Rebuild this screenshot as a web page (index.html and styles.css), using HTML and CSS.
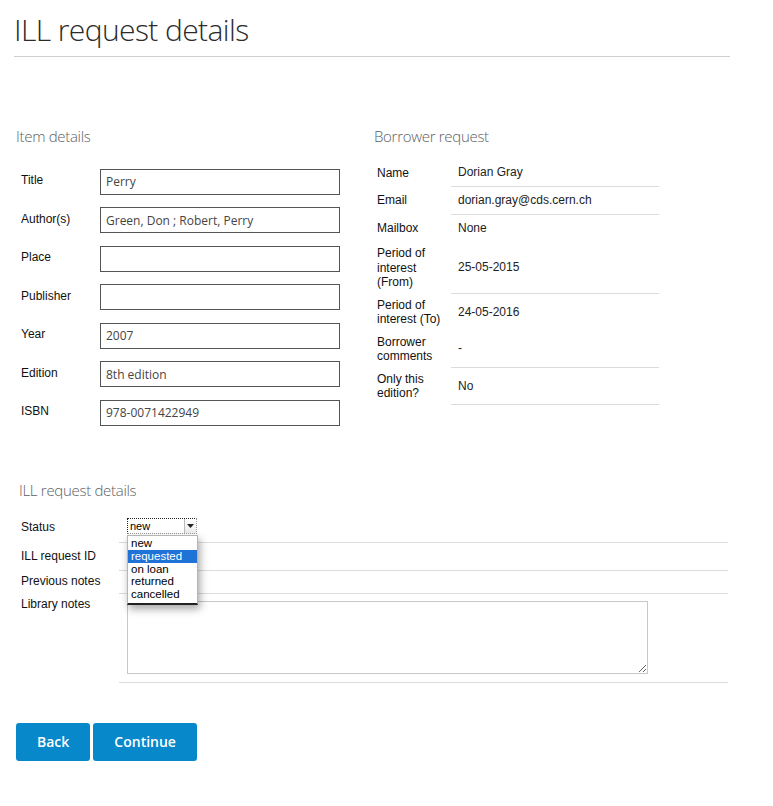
FILE: index.html
```html
<!DOCTYPE html>
<html>
<head>
<meta charset="utf-8">
<title>ILL request details</title>
<link rel="stylesheet" href="styles.css">
</head>
<body>
<div class="page">
  <h1 class="page-title">ILL request details</h1>
  <hr class="rule">

  <div class="columns">
    <section class="col">
      <h2 class="section-title">Item details</h2>
      <div class="item-form">
        <label class="item-label">Title</label><input class="item-input" type="text" value="Perry">
        <label class="item-label">Author(s)</label><input class="item-input" type="text" value="Green, Don ; Robert, Perry">
        <label class="item-label">Place</label><input class="item-input" type="text" value="">
        <label class="item-label">Publisher</label><input class="item-input" type="text" value="">
        <label class="item-label">Year</label><input class="item-input" type="text" value="2007">
        <label class="item-label">Edition</label><input class="item-input" type="text" value="8th edition">
        <label class="item-label">ISBN</label><input class="item-input" type="text" value="978-0071422949">
      </div>
    </section>

    <section class="col">
      <h2 class="section-title">Borrower request</h2>
      <table class="borrower">
        <tr><th>Name</th><td class="line">Dorian Gray</td></tr>
        <tr><th>Email</th><td class="line">dorian.gray@cds.cern.ch</td></tr>
        <tr><th>Mailbox</th><td>None</td></tr>
        <tr><th>Period of interest (From)</th><td class="line">25-05-2015</td></tr>
        <tr><th>Period of interest (To)</th><td>24-05-2016</td></tr>
        <tr><th>Borrower comments</th><td class="line">-</td></tr>
        <tr><th>Only this edition?</th><td class="line">No</td></tr>
      </table>
    </section>
  </div>

  <section class="ill">
    <h2 class="section-title ill-title">ILL request details</h2>
    <div class="ill-grid">
      <div class="ill-label status-label">Status</div>
      <div class="ill-value status-value">
        <div class="popup">
          <span class="popup-text">new</span>
          <span class="popup-arrow"><svg width="7" height="4" viewBox="0 0 7 4"><path d="M0 0H7L3.5 4Z" fill="#222"/></svg></span>
          <ul class="popup-menu">
            <li>new</li>
            <li class="selected">requested</li>
            <li>on loan</li>
            <li>returned</li>
            <li>cancelled</li>
          </ul>
        </div>
      </div>

      <div class="ill-label">ILL request ID</div>
      <div class="ill-value ruled id-value"></div>

      <div class="ill-label">Previous notes</div>
      <div class="ill-value ruled prev-value"></div>

      <div class="ill-label top-label">Library notes</div>
      <div class="ill-value ruled notes-value"><textarea class="notes"></textarea></div>
    </div>
  </section>

  <div class="actions">
    <button class="btn" type="button">Back</button>
    <button class="btn" type="button">Continue</button>
  </div>
</div>
</body>
</html>
```

FILE: styles.css
```css
html, body {
  margin: 0;
  padding: 0;
  background: #fff;
}

body {
  font-family: "Liberation Sans", Arial, sans-serif;
  font-size: 12px;
  color: #222;
}

.page {
  width: 716px;
  padding-left: 14px;
}

.page-title {
  margin: 12px 0 0 0;
  font-family: "Open Sans", sans-serif;
  font-weight: 300;
  font-size: 30px;
  letter-spacing: -0.6px;
  line-height: 36px;
  color: #2b2b2b;
}

.rule {
  margin: 8px 0 0 0;
  border: 0;
  border-top: 1px solid #cfcfcf;
  height: 0;
}

.columns {
  display: grid;
  grid-template-columns: 358px 358px;
  margin-top: 69px;
}

.section-title {
  margin: 0;
  padding-left: 2px;
  font-family: "Open Sans", sans-serif;
  font-weight: 300;
  font-size: 15px;
  letter-spacing: -0.3px;
  line-height: 20px;
  color: #5e5e5e;
}

/* Item details form */
.item-form {
  margin-top: 22.5px;
  padding-left: 7px;
  display: grid;
  grid-template-columns: 79px 240px;
  row-gap: 12.5px;
  align-items: center;
}

.item-label {
  font-size: 12px;
  color: #111;
  padding-bottom: 3px;
}

.item-input {
  box-sizing: border-box;
  width: 240px;
  height: 26px;
  margin: 0;
  padding: 0 5px;
  border: 1px solid #555;
  border-radius: 0;
  font-family: "Open Sans", sans-serif;
  font-size: 12px;
  color: #444;
  background: #fff;
  outline: none;
}

/* Borrower table */
.borrower {
  margin-top: 13px;
  border-collapse: collapse;
  width: 287px;
}

.borrower th {
  text-align: left;
  font-weight: normal;
  color: #111;
  width: 68px;
  padding: 4px 6px 4px 5px;
  line-height: 14.5px;
  vertical-align: middle;
}

.borrower td {
  padding: 4px 0 4px 7px;
  line-height: 19px;
  color: #222;
  vertical-align: middle;
}

.borrower td.line {
  border-bottom: 1px solid #dcdcdc;
}

/* ILL request section */
.ill {
  margin-top: 54px;
}

.ill-title {
  padding-left: 5px;
}

.ill-grid {
  margin-top: 11px;
  display: grid;
  grid-template-columns: 98px 609px;
  padding-left: 7px;
}

.ill-label {
  color: #111;
  line-height: 14px;
  align-self: center;
}

.status-label {
  padding-top: 2px;
}

.top-label {
  align-self: start;
  padding-top: 4px;
}

.ill-value {
  padding-left: 8px;
}

.ill-value.ruled {
  border-top: 1px solid #dcdcdc;
}

.status-value {
  height: 31px;
  display: flex;
  align-items: center;
}

.id-value {
  height: 27px;
}

.prev-value {
  height: 22px;
}

.notes-value {
  padding-top: 7px;
  padding-bottom: 8px;
  border-bottom: 1px solid #dcdcdc;
}

.notes {
  display: block;
  box-sizing: border-box;
  width: 521px;
  height: 73px;
  margin: 0;
  border: 1px solid #c8c8c8;
  resize: both;
  background: #fff;
}

/* Mac style popup select */
.popup {
  position: relative;
  box-sizing: border-box;
  width: 70px;
  height: 16px;
  display: flex;
  align-items: center;
  border: 1px dotted #222;
  border-right-color: #999;
  border-bottom-color: #999;
  background: #fff;
  font-family: "Liberation Sans", Arial, sans-serif;
  font-size: 11px;
  color: #000;
}

.popup-text {
  flex: 1;
  padding-left: 2px;
  line-height: 14px;
}

.popup-arrow {
  width: 11px;
  height: 14px;
  border-left: 1px solid #bbb;
  display: flex;
  align-items: center;
  justify-content: center;
  background: linear-gradient(#fff, #ececec);
}

.popup-menu {
  position: absolute;
  top: 16px;
  left: -1px;
  width: 71px;
  box-sizing: border-box;
  margin: 0;
  padding: 1px 0 2px 0;
  list-style: none;
  background: #fff;
  border: 1px solid #b5b5b5;
  border-bottom: 2px solid #222;
  box-shadow: 2px 4px 8px rgba(0, 0, 0, 0.35);
  z-index: 5;
}

.popup-menu li {
  height: 12.8px;
  line-height: 12.8px;
  padding-left: 3px;
  font-size: 11.5px;
  color: #000;
}

.popup-menu li.selected {
  background: #1f73d6;
  color: #fff;
}

/* Buttons */
.actions {
  margin-top: 40px;
  padding-left: 2px;
  display: flex;
  gap: 3px;
}

.btn {
  height: 38px;
  padding: 0 21px;
  margin: 0;
  border: 0;
  border-radius: 3px;
  background: #0788cb;
  color: #fff;
  font-family: "Open Sans", sans-serif;
  font-weight: 600;
  font-size: 14px;
  cursor: pointer;
}
```
